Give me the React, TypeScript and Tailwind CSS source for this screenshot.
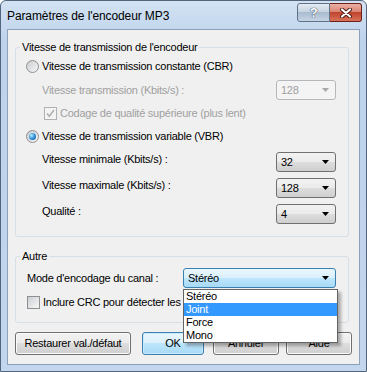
import React from "react";

const btnBg = "bg-[linear-gradient(#f2f2f2,#ebebeb_49%,#dddddd_50%,#cfcfcf)]";
const hotBg = "bg-[linear-gradient(#eaf6fd,#d9f0fc_49%,#bee6fd_50%,#a7d9f5)]";

function Arrow({ disabled }: { disabled?: boolean }) {
  return (
    <svg width="7" height="4" viewBox="0 0 7 4" className="shrink-0">
      <path d="M0 0h7L3.5 4z" fill={disabled ? "#a8a8a8" : "#000"} />
    </svg>
  );
}

function Combo({ value, w, disabled, hot }: { value: string; w: string; disabled?: boolean; hot?: boolean }) {
  const look = disabled
    ? "border-[#b5b8ba] bg-[#f4f4f4] text-[#a0a0a0]"
    : hot
    ? `border-[#3c7fb1] ${hotBg} text-black`
    : `border-[#707070] ${btnBg} text-black`;
  return (
    <div className={`${w} h-[20px] shrink-0 rounded-[3px] border flex items-center pl-[4px] pr-[6px] ${look}`}>
      <span className="flex-1">{value}</span>
      <Arrow disabled={disabled} />
    </div>
  );
}

function Radio({ checked }: { checked?: boolean }) {
  return (
    <span className="w-[13px] h-[13px] shrink-0 rounded-full border border-[#8e8f8f] bg-[linear-gradient(135deg,#c9ccd1,#f7f7f7)] flex items-center justify-center">
      {checked && (
        <span className="w-[7px] h-[7px] rounded-full bg-[radial-gradient(circle_at_35%_35%,#b5ecff,#2a8ad4_55%,#0b4f8c)]" />
      )}
    </span>
  );
}

function Check({ checked, disabled }: { checked?: boolean; disabled?: boolean }) {
  return (
    <span
      className={`w-[13px] h-[13px] shrink-0 border flex items-center justify-center ${
        disabled ? "border-[#b1b1b1] bg-[#f4f4f4]" : "border-[#8e8f8f] bg-[linear-gradient(135deg,#cbcfd5,#f7f7f7)]"
      }`}
    >
      {checked && (
        <svg width="9" height="9" viewBox="0 0 9 9">
          <path d="M1 4.5l2.3 2.8L8 1" stroke={disabled ? "#b0b0b0" : "#1e3d6a"} strokeWidth="1.6" fill="none" />
        </svg>
      )}
    </span>
  );
}

function Button({ label, w, def }: { label: string; w: string; def?: boolean }) {
  return (
    <div
      className={`${w} h-[23px] rounded-[3px] border flex items-center justify-center ${
        def ? `border-[#3c7fb1] ${hotBg} shadow-[inset_0_0_0_1px_#c9eafd]` : `border-[#707070] ${btnBg} shadow-[inset_0_0_0_1px_#fafafa]`
      }`}
    >
      {label}
    </div>
  );
}

export default function App() {
  return (
    <div className="w-[367px] h-[372px] flex flex-col rounded-t-[6px] border border-[#52657c] bg-[linear-gradient(#d3e2f3,#bdd3ec_40px,#c2d6ed)] font-['Liberation_Sans',Arial,sans-serif] text-[11px] leading-[13px] tracking-[-0.25px] text-black overflow-hidden">
      {/* title bar */}
      <div className="h-[28px] flex items-start pl-[6px] pr-[4px]">
        <span className="mt-[8px] text-[12px] leading-[14px] tracking-[-0.1px]">Paramètres de l'encodeur MP3</span>
        <div className="ml-auto mt-[2px] flex">
          <div className="w-[33px] h-[19px] rounded-l-[3px] border border-[#5f7288] bg-[linear-gradient(#e4ebf3,#c3d1e0_50%,#a9bbcf_50%,#c6d5e5)] flex items-center justify-center">
            <span className="text-white font-bold text-[13px] leading-[13px] [text-shadow:0_0_1px_#2a3a4e,0_0_1px_#2a3a4e]">?</span>
          </div>
          <div className="w-[32px] h-[19px] rounded-r-[3px] border border-l-0 border-[#6d2119] bg-[linear-gradient(#ecb0a4,#d8806f_50%,#c0432d_50%,#d9735b)] flex items-center justify-center">
            <svg width="14" height="10" viewBox="0 0 14 10">
              <path d="M3 1.5l8 7M11 1.5l-8 7" stroke="#4a1a14" strokeWidth="4" strokeLinecap="round" />
              <path d="M3 1.5l8 7M11 1.5l-8 7" stroke="#fff" strokeWidth="2.2" strokeLinecap="round" />
            </svg>
          </div>
        </div>
      </div>

      {/* client area */}
      <div className="relative flex-1 mx-[6px] mb-[6px] border border-[#8da2ba] bg-[#f0f0f0] flex flex-col px-[7px]">
        <fieldset className="mt-[11px] w-[334px] rounded-[3px] border border-[#d5dfe5]">
          <legend className="ml-[4px] px-[2px]">Vitesse de transmission de l'encodeur</legend>
          <div className="pl-[10px] pr-[12px] pt-[6px] pb-[12px]">
            <div className="flex items-center gap-[3px]">
              <Radio />
              <span>Vitesse de transmission constante (CBR)</span>
            </div>
            <div className="mt-[7px] flex items-center pl-[16px]">
              <span className="flex-1 text-[#a0a0a0]">Vitesse transmission (Kbits/s) :</span>
              <Combo value="128" w="w-[60px]" disabled />
            </div>
            <div className="mt-[7px] flex items-center gap-[3px] pl-[18px]">
              <Check checked disabled />
              <span className="text-[#a0a0a0]">Codage de qualité supérieure (plus lent)</span>
            </div>
            <div className="mt-[10px] flex items-center gap-[3px]">
              <Radio checked />
              <span>Vitesse de transmission variable (VBR)</span>
            </div>
            <div className="mt-[9px] flex items-start pl-[16px]">
              <span className="flex-1 pt-[1px]">Vitesse minimale (Kbits/s) :</span>
              <Combo value="32" w="w-[60px]" />
            </div>
            <div className="mt-[6px] flex items-start pl-[16px]">
              <span className="flex-1 pt-[1px]">Vitesse maximale (Kbits/s) :</span>
              <Combo value="128" w="w-[60px]" />
            </div>
            <div className="mt-[6px] flex items-start pl-[16px]">
              <span className="flex-1 pt-[1px]">Qualité :</span>
              <Combo value="4" w="w-[60px]" />
            </div>
          </div>
        </fieldset>

        <fieldset className="mt-[13px] w-[334px] rounded-[3px] border border-[#d5dfe5]">
          <legend className="ml-[4px] px-[2px]">Autre</legend>
          <div className="pl-[11px] pr-[12px] pt-[5px] pb-[13px]">
            <div className="flex items-center">
              <span className="flex-1">Mode d'encodage du canal :</span>
              <div className="relative">
                <Combo value="Stéréo" w="w-[153px]" hot />
                <div className="absolute left-0 top-[21px] z-10 w-[155px] border border-[#646464] bg-white shadow-[3px_3px_3px_rgba(0,0,0,0.3)] flex flex-col">
                  <span className="h-[13px] pl-[2px]">Stéréo</span>
                  <span className="h-[13px] pl-[2px] bg-[#3399ff] text-white">Joint</span>
                  <span className="h-[13px] pl-[2px]">Force</span>
                  <span className="h-[13px] pl-[2px]">Mono</span>
                </div>
              </div>
            </div>
            <div className="mt-[8px] flex items-center gap-[3px]">
              <Check />
              <span>Inclure CRC pour détecter les erreurs</span>
            </div>
          </div>
        </fieldset>

        <div className="mt-[9px] flex">
          <Button label="Restaurer val./défaut" w="w-[117px]" />
          <div className="ml-[11px]">
            <Button label="OK" w="w-[62px]" def />
          </div>
          <div className="ml-[9px]">
            <Button label="Annuler" w="w-[66px]" />
          </div>
          <div className="ml-[7px]">
            <Button label="Aide" w="w-[66px]" />
          </div>
        </div>
      </div>
    </div>
  );
}
